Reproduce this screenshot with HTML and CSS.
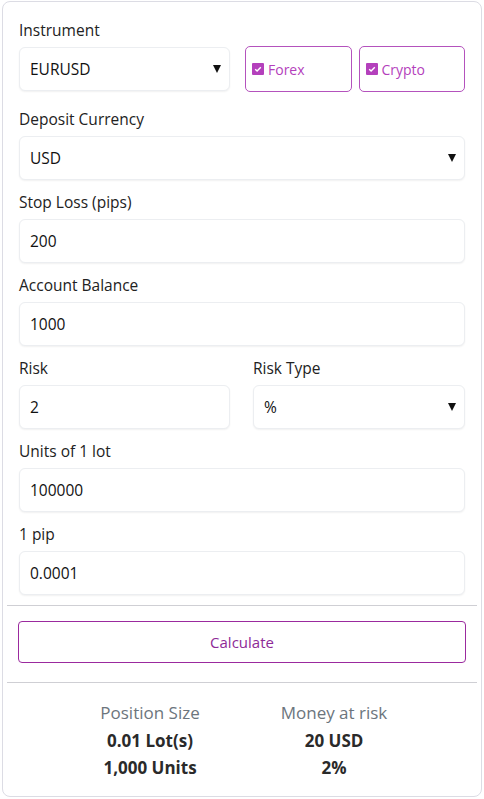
FILE: index.html
```html
<!DOCTYPE html>
<html>
<head>
<meta charset="utf-8">
<link rel="stylesheet" href="styles.css">
</head>
<body>
<div class="card">
  <div class="group first">
    <div class="label">Instrument</div>
    <div class="inst-row">
      <div class="field select inst"><span>EURUSD</span><span class="arrow"></span></div>
      <div class="tiles">
        <div class="tile"><span class="cb"><svg viewBox="0 0 12 12" width="12" height="12"><path d="M3.2 6.3 L5.1 8.1 L8.8 4.2" fill="none" stroke="#fff" stroke-width="1.4"/></svg></span>Forex</div>
        <div class="tile"><span class="cb"><svg viewBox="0 0 12 12" width="12" height="12"><path d="M3.2 6.3 L5.1 8.1 L8.8 4.2" fill="none" stroke="#fff" stroke-width="1.4"/></svg></span>Crypto</div>
      </div>
    </div>
  </div>
  <div class="group">
    <div class="label">Deposit Currency</div>
    <div class="field select"><span>USD</span><span class="arrow"></span></div>
  </div>
  <div class="group">
    <div class="label">Stop Loss (pips)</div>
    <div class="field">200</div>
  </div>
  <div class="group">
    <div class="label">Account Balance</div>
    <div class="field">1000</div>
  </div>
  <div class="group two">
    <div>
      <div class="label">Risk</div>
      <div class="field">2</div>
    </div>
    <div>
      <div class="label">Risk Type</div>
      <div class="field select"><span>%</span><span class="arrow"></span></div>
    </div>
  </div>
  <div class="group">
    <div class="label">Units of 1 lot</div>
    <div class="field">100000</div>
  </div>
  <div class="group last">
    <div class="label">1 pip</div>
    <div class="field">0.0001</div>
  </div>
  <hr class="divider">
  <button class="calc">Calculate</button>
  <hr class="divider second">
  <div class="results">
    <div class="col">
      <div class="rtitle">Position Size</div>
      <div class="rval">0.01 Lot(s)</div>
      <div class="rval">1,000 Units</div>
    </div>
    <div class="col">
      <div class="rtitle">Money at risk</div>
      <div class="rval">20 USD</div>
      <div class="rval">2%</div>
    </div>
  </div>
</div>
</body>
</html>
```

FILE: styles.css
```css
* { box-sizing: border-box; }
html, body { margin: 0; padding: 0; background: #fff; }
body {
  padding: 1px 2px 2px 2px;
  font-family: "Open Sans", "Noto Sans", sans-serif;
  color: #212529;
}
.card {
  border: 1px solid #dcdce4;
  border-radius: 8px;
  padding: 18px 16px 0 16px;
  height: 796px;
}
.group { margin-bottom: 12px; }
.group.first { margin-bottom: 17px; }
.group.first .label { margin-bottom: 6px; }
.group.last { margin-bottom: 10px; }
.label {
  font-size: 15.5px;
  line-height: 20px;
  height: 20px;
  margin-bottom: 7px;
  color: #222;
}
.field {
  height: 44px;
  border: 1px solid #eceef1;
  border-radius: 6px;
  box-shadow: 0 1px 2px rgba(0,0,0,0.06);
  padding: 0 8px 0 10px;
  display: flex;
  align-items: center;
  font-size: 15.5px;
  color: #111;
  background: #fff;
}
.select { justify-content: space-between; }
.arrow {
  width: 0; height: 0;
  border-left: 4.5px solid transparent;
  border-right: 4.5px solid transparent;
  border-top: 8px solid #111;
}
.inst-row { display: flex; align-items: flex-start; }
.inst { flex: 0 0 211px; margin-right: 15px; margin-top: 1px; }
.tiles { flex: 1; display: flex; gap: 7px; }
.tile {
  flex: 1;
  height: 46px;
  border: 1px solid #b452bd;
  border-radius: 5px;
  display: flex;
  align-items: center;
  padding-left: 6px;
  font-size: 14px;
  color: #b43fbc;
}
.cb {
  width: 12px; height: 12px;
  background: #b440bc;
  border-radius: 1px;
  margin-right: 4px;
  display: inline-flex;
}
.two { display: grid; grid-template-columns: 211px 1fr; column-gap: 23px; }
.divider {
  border: 0;
  border-top: 1px solid #cfcfd4;
  margin: 0 -12px;
  height: 0;
}
.calc {
  display: block;
  width: 448px;
  margin: 15px 0 0 -1px;
  height: 42px;
  background: #fff;
  border: 1px solid #9b2a9e;
  border-radius: 4px;
  color: #8e2a97;
  font-family: "Open Sans", "Noto Sans", sans-serif;
  font-size: 15px;
}
.divider.second { margin-top: 19px; }
.results {
  display: grid;
  grid-template-columns: 184px 184px;
  justify-content: center;
  text-align: center;
  padding-top: 18px;
}
.rtitle { font-size: 17px; line-height: 24px; color: #6c757d; margin-bottom: 2px; }
.rval { font-size: 17px; font-weight: 700; line-height: 27px; color: #2a2a2a; }
```
